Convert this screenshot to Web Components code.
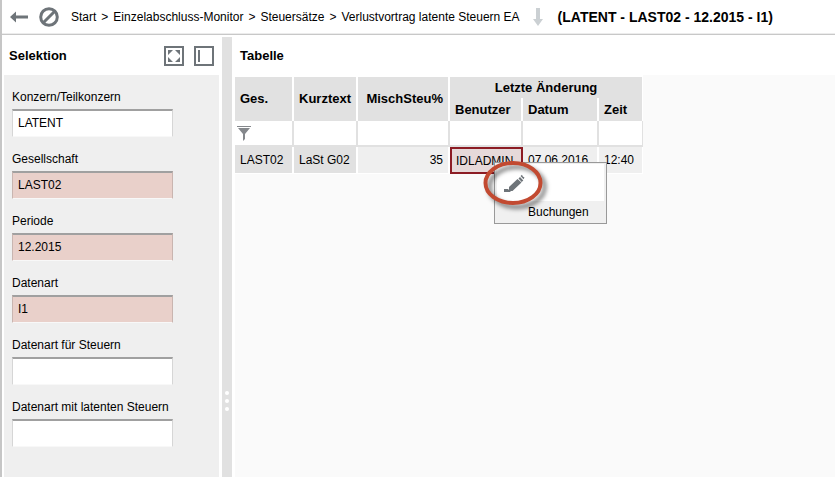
<!DOCTYPE html>
<html lang="de">
<head>
<meta charset="utf-8">
<title>Verlustvortrag latente Steuern EA</title>
<style>
  html, body { height: 100%; }
  body {
    margin: 0;
    font: 12px/16px "Liberation Sans", Arial, sans-serif;
    color: #000;
    background: #fff;
  }
</style>
</head>
<body>

<idl-app>
  <idl-toolbar slot="toolbar" context="(LATENT - LAST02 - 12.2015 - I1)">
    <a href="#start">Start</a>
    <a href="#monitor">Einzelabschluss-Monitor</a>
    <a href="#steuersaetze">Steuersätze</a>
    <a href="#verlustvortrag">Verlustvortrag latente Steuern EA</a>
  </idl-toolbar>
  <idl-selection heading="Selektion">
    <idl-field label="Konzern/Teilkonzern" value="LATENT"></idl-field>
    <idl-field label="Gesellschaft" value="LAST02" required></idl-field>
    <idl-field label="Periode" value="12.2015" required></idl-field>
    <idl-field label="Datenart" value="I1" required></idl-field>
    <idl-field label="Datenart für Steuern"></idl-field>
    <idl-field label="Datenart mit latenten Steuern"></idl-field>
  </idl-selection>
  <idl-splitter></idl-splitter>
  <idl-table heading="Tabelle">
    <idl-context-menu slot="menu">Buchungen</idl-context-menu>
  </idl-table>
</idl-app>

<script>
customElements.define(
  "idl-app",
  class extends HTMLElement {
    constructor() {
      super();
      const shadowRoot = this.attachShadow({ mode: "open" });
      shadowRoot.innerHTML = `
      <style>
      :host {
        display: flex;
        flex-direction: column;
        box-sizing: border-box;
        min-height: 100%;
        border-left: 2px solid #c6c6c6;
      }
      .main {
        flex: 1;
        display: flex;
        gap: 3px;
        padding: 2px 0 0 2px;
      }
      </style>

      <slot name="toolbar"></slot>
      <div class="main"><slot></slot></div>
    `;
    }
  }
);

customElements.define(
  "idl-toolbar",
  class extends HTMLElement {
    constructor() {
      super();
      const shadowRoot = this.attachShadow({ mode: "open" });
      shadowRoot.innerHTML = `
      <style>
      :host {
        display: flex;
        align-items: center;
        box-sizing: border-box;
        height: 35px;
        padding-left: 8px;
        border-bottom: 1px solid #c8c8c8;
        box-shadow: inset 0 -1px #ececec;
      }
      button {
        display: flex;
        padding: 0;
        border: 0;
        background: none;
      }
      .cancel { margin-left: 11px; }
      nav {
        display: flex;
        gap: 5px;
        margin: 0 12px;
        white-space: nowrap;
      }
      ::slotted(a) {
        color: inherit;
        text-decoration: none;
      }
      strong {
        margin-left: 14px;
        font-size: 14px;
        white-space: nowrap;
      }
      </style>

      <button aria-label="Zurück">
        <svg width="18" height="12" viewBox="0 0 18 12"><path fill="#6e7479" d="M0 6 6 .5V4.500H18V7.500H6V11.500Z"/></svg>
      </button>
      <button class="cancel" aria-label="Abbrechen">
        <svg width="20" height="20" viewBox="0 0 20 20" fill="none" stroke="#6e7479" stroke-width="3"><circle cx="10" cy="10" r="8.300"/><path d="M4.500 15.500 15.500 4.500"/></svg>
      </button>
      <nav></nav>
      <svg width="12" height="18" viewBox="0 0 12 18"><path fill="#cbd0d3" d="M4 0H8V11H11L6 18 1 11H4Z"/></svg>
      <strong></strong>
    `;
    }

    connectedCallback() {
      const nav = this.shadowRoot.querySelector("nav");
      this.querySelectorAll("a").forEach((link, i) => {
        if (i > 0) {
          const separator = document.createElement("span");
          separator.textContent = ">";
          nav.appendChild(separator);
        }
        const slot = document.createElement("slot");
        slot.name = link.slot = "crumb" + i;
        nav.appendChild(slot);
      });
      this.shadowRoot.querySelector("strong").textContent =
        this.getAttribute("context");
    }
  }
);

customElements.define(
  "idl-selection",
  class extends HTMLElement {
    constructor() {
      super();
      const shadowRoot = this.attachShadow({ mode: "open" });
      shadowRoot.innerHTML = `
      <style>
      :host {
        flex: none;
        display: flex;
        flex-direction: column;
        width: 215px;
      }
      header {
        display: flex;
        align-items: center;
        gap: 10px;
        height: 38px;
        padding: 0 5px;
      }
      h2 {
        flex: 1;
        margin: 0;
        font-size: 13px;
      }
      button {
        display: flex;
        padding: 0;
        border: 0;
        background: none;
      }
      .fields {
        flex: 1;
        display: flex;
        flex-direction: column;
        gap: 14px;
        padding: 14px 8px;
        background: #efefef;
      }
      </style>

      <header>
        <h2></h2>
        <button aria-label="Maximieren">
          <svg width="20" height="20" viewBox="0 0 20 20"><path fill="none" stroke="#6e7479" stroke-width="2" d="M1 1H19V19H1Z"/><path fill="#6e7479" d="M4 4H9L4 9ZM11 4H16V9ZM4 11 9 16H4ZM16 11V16H11Z"/></svg>
        </button>
        <button aria-label="Seitenleiste ausblenden">
          <svg width="20" height="20" viewBox="0 0 20 20"><path fill="none" stroke="#6e7479" stroke-width="2" d="M1 1H19V19H1ZM5 4V16"/></svg>
        </button>
      </header>
      <div class="fields"><slot></slot></div>
    `;
    }

    connectedCallback() {
      this.shadowRoot.querySelector("h2").textContent =
        this.getAttribute("heading");
    }
  }
);

customElements.define(
  "idl-field",
  class extends HTMLElement {
    constructor() {
      super();
      const shadowRoot = this.attachShadow({ mode: "open" });
      shadowRoot.innerHTML = `
      <style>
      :host {
        display: flex;
        flex-direction: column;
        align-items: flex-start;
        gap: 4px;
      }
      label { white-space: nowrap; }
      input {
        box-sizing: border-box;
        width: 161px;
        height: 28px;
        padding: 0 5px 2px;
        border: 1px solid #d6d6d6;
        border-top: 2px solid #a0a0a0;
        border-bottom-color: #f8f8f8;
        background: #fff;
        font: inherit;
        color: inherit;
      }
      :host([required]) input {
        border-left-color: #c9b5b0;
        border-right-color: #c9b5b0;
        background: #e9d0ca;
      }
      </style>

      <label for="value"></label>
      <input id="value" type="text">
    `;
    }

    connectedCallback() {
      this.shadowRoot.querySelector("label").textContent =
        this.getAttribute("label");
      this.shadowRoot.querySelector("input").value =
        this.getAttribute("value") || "";
    }
  }
);

customElements.define(
  "idl-splitter",
  class extends HTMLElement {
    constructor() {
      super();
      const shadowRoot = this.attachShadow({ mode: "open" });
      shadowRoot.innerHTML = `
      <style>
      :host {
        flex: none;
        display: flex;
        flex-direction: column;
        align-items: center;
        gap: 4px;
        box-sizing: border-box;
        width: 10px;
        padding-top: 354px;
        background: #e1e1e1;
      }
      i {
        width: 4px;
        height: 4px;
        border-radius: 50%;
        background: #fff;
      }
      </style>

      <i></i><i></i><i></i>
    `;
    }
  }
);

customElements.define(
  "idl-table",
  class extends HTMLElement {
    constructor() {
      super();
      const shadowRoot = this.attachShadow({ mode: "open" });
      shadowRoot.innerHTML = `
      <style>
      :host {
        flex: 1;
        display: flex;
        flex-direction: column;
        min-width: 0;
      }
      h2 {
        margin: 0;
        padding-left: 5px;
        font-size: 13px;
        line-height: 38px;
      }
      .content {
        flex: 1;
        background: #fafafa;
      }
      table {
        table-layout: fixed;
        width: 408px;
        border-spacing: 0;
        border-top: 2px solid #fff;
        background: #fff;
      }
      th, td {
        box-sizing: border-box;
        padding: 0 5px;
        border-right: 2px solid #fff;
        text-align: left;
        white-space: nowrap;
      }
      th {
        background: #e1e1e1;
        font-size: 13px;
      }
      .group th { height: 21px; }
      .names th { height: 23px; }
      th.span { text-align: center; }
      th.last, td:last-child { border-right-width: 1px; }
      .number { text-align: right; }
      .filter td {
        height: 26px;
        padding: 0;
        border-right-color: #e1e1e1;
        border-bottom: 2px solid #e1e1e1;
      }
      .filter label {
        display: flex;
        align-items: center;
        padding-left: 2px;
      }
      .filter svg { flex: none; }
      .filter input {
        box-sizing: border-box;
        width: 100%;
        min-width: 0;
        height: 22px;
        padding: 0 5px;
        border: 0;
        outline: 0;
        background: none;
        font: inherit;
      }
      .data td {
        height: 27px;
        border-bottom: 1px solid #fff;
        background: #efefef;
      }
      .data td.key { background: #e1e1e1; }
      .data td.selected {
        position: relative;
        border: 2px solid #8c1c24;
        padding: 0 4px;
        background: #e6d9d9;
      }
      ::slotted(idl-context-menu) {
        position: absolute;
        left: 42px;
        top: 13px;
      }
      </style>

      <h2></h2>
      <div class="content">
        <table>
          <colgroup>
            <col style="width: 59px">
            <col style="width: 64px">
            <col style="width: 92px">
            <col style="width: 73px">
            <col style="width: 76px">
            <col style="width: 44px">
          </colgroup>
          <thead>
            <tr class="group">
              <th rowspan="2">Ges.</th>
              <th rowspan="2">Kurztext</th>
              <th rowspan="2" class="number">MischSteu%</th>
              <th colspan="3" class="span last">Letzte Änderung</th>
            </tr>
            <tr class="names">
              <th>Benutzer</th>
              <th>Datum</th>
              <th class="last">Zeit</th>
            </tr>
          </thead>
          <tbody>
            <tr class="filter">
              <td>
                <label>
                  <svg width="14" height="15" viewBox="0 0 14 15"><path fill="#85888c" d="M0 0H14V1H0ZM1 2H13L8 8V13L6 15V8Z"/></svg>
                  <input type="text" aria-label="Filter Ges.">
                </label>
              </td>
              <td><input type="text" aria-label="Filter Kurztext"></td>
              <td><input type="text" aria-label="Filter MischSteu%"></td>
              <td><input type="text" aria-label="Filter Benutzer"></td>
              <td><input type="text" aria-label="Filter Datum"></td>
              <td><input type="text" aria-label="Filter Zeit"></td>
            </tr>
            <tr class="data">
              <td class="key">LAST02</td>
              <td class="key">LaSt G02</td>
              <td class="number">35</td>
              <td class="selected">IDLADMIN<slot name="menu"></slot></td>
              <td>07.06.2016</td>
              <td>12:40</td>
            </tr>
          </tbody>
        </table>
      </div>
    `;
    }

    connectedCallback() {
      this.shadowRoot.querySelector("h2").textContent =
        this.getAttribute("heading");
    }
  }
);

customElements.define(
  "idl-context-menu",
  class extends HTMLElement {
    constructor() {
      super();
      const shadowRoot = this.attachShadow({ mode: "open" });
      shadowRoot.innerHTML = `
      <style>
      :host {
        display: block;
        box-sizing: border-box;
        width: 113px;
        padding: 1px 2px;
        border: 1px solid #999;
        background: #f0f0f0;
      }
      button {
        display: flex;
        align-items: center;
        width: 100%;
        padding: 0;
        border: 0;
        background: none;
        font: inherit;
        color: inherit;
      }
      .edit {
        height: 37px;
        padding-left: 6px;
        background: #fff;
      }
      .entry {
        height: 21px;
        padding-left: 31px;
      }
      /* highlight ring drawn over the edit entry */
      .ring {
        position: absolute;
        left: -14px;
        top: -4px;
        filter: drop-shadow(4px 4px 2px rgba(0, 0, 0, .5));
        pointer-events: none;
      }
      </style>

      <button class="edit" aria-label="Bearbeiten">
        <svg width="22" height="18" viewBox="0 0 22 18" fill="#6e7479"><path d="M1 15H5L8 18H1ZM6 13 14.500 5 18.500 8.500 9.500 17 6 17ZM15.500 4.500 17 3 20.300 6.500 18.700 8ZM17.500 2 19 .8 19.800 2.500 21.500 3.500 20.500 5.200Z"/></svg>
      </button>
      <button class="entry"><slot></slot></button>
      <svg class="ring" width="64" height="48" viewBox="0 0 64 48"><ellipse cx="32" cy="24" rx="27.500" ry="20" fill="none" stroke="#c24a31" stroke-width="4"/></svg>
    `;
    }
  }
);
</script>
</body>
</html>
